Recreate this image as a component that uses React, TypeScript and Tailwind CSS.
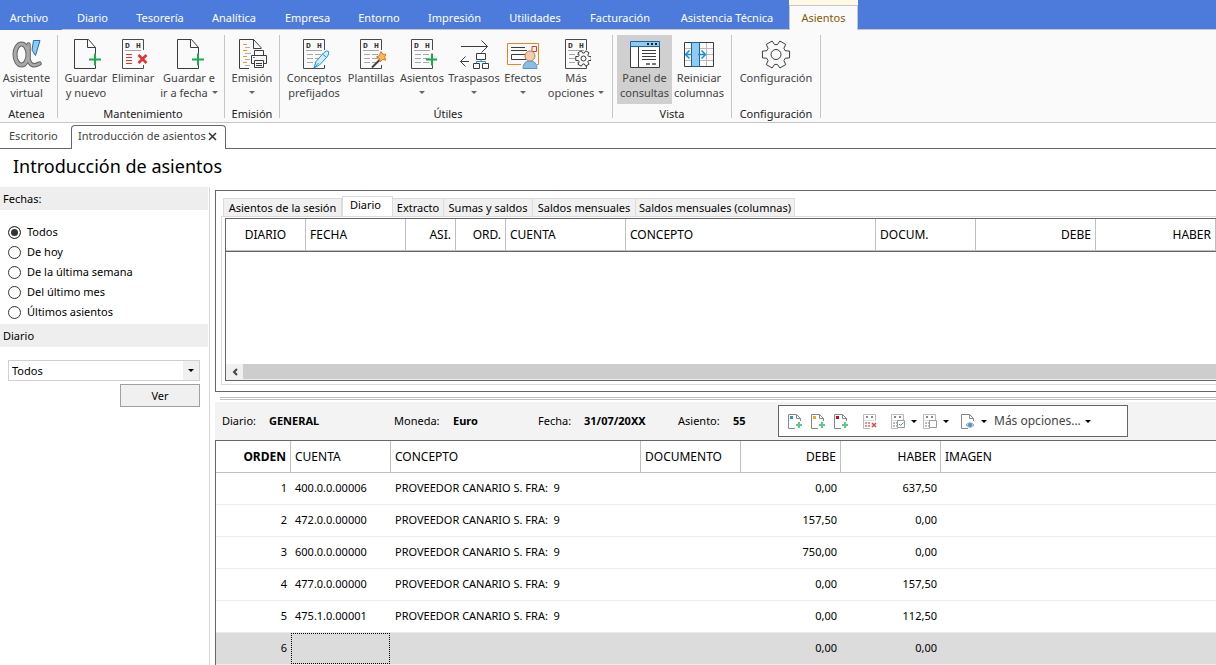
import React from 'react';
import clsx from 'clsx';

interface IconProps {
  children?: React.ReactNode;
  size?: string;
}

const Icon: React.FC<IconProps> = ({ children, size = '0 0 30 30' }) => {
  const [, , w, h] = size.split(' ');
  return (
    <svg
      viewBox={size}
      width={w}
      height={h}
      fill="none"
      stroke="#3c3c3c"
      className="shrink-0"
      aria-hidden="true"
    >
      {children}
    </svg>
  );
};

const gearPath = (cx: number, cy: number, outer: number, inner: number) => {
  const points: string[] = [];
  for (let i = 0; i < 6; i++) {
    const steps: [number, number][] = [
      [-22, inner],
      [-14, outer],
      [14, outer],
      [22, inner],
    ];
    steps.forEach(([offset, r]) => {
      const a = ((i * 60 + offset) * Math.PI) / 180;
      points.push(
        `${(cx + r * Math.cos(a)).toFixed(2)} ${(cy + r * Math.sin(a)).toFixed(2)}`
      );
    });
  }
  return `M${points.join('L')}Z`;
};

const AlphaIcon = () => (
  <Icon size="0 0 30 30">
    <ellipse cx="9.5" cy="15.5" rx="6.5" ry="10.5" stroke="#666" strokeWidth="5" />
    <path
      d="M16.500 5.500V20Q18.500 29.500 27.500 24.500"
      stroke="#666"
      strokeWidth="4.5"
      strokeLinecap="round"
    />
    <ellipse cx="9.5" cy="15.5" rx="6.5" ry="10.5" stroke="#a9a9a9" strokeWidth="3" />
    <path
      d="M16.500 5.500V20Q18.500 29.500 27.500 24.500"
      stroke="#a9a9a9"
      strokeWidth="2.5"
      strokeLinecap="round"
    />
    <path d="M21.500 1.500H28L23.500 16.500L20 11Z" fill="#8ec9f2" stroke="#1a6fb5" />
  </Icon>
);

const SaveIcon = () => (
  <Icon>
    <path d="M24.500 24.500V29.500H3.500V.5H17.500L24.500 8.500V15M16.500 .5V8.500H24.500" />
    <path d="M24 14.500V26.500M18 20.500H30" stroke="#19a94f" strokeWidth="2" />
  </Icon>
);

interface LedgerProps {
  children?: React.ReactNode;
  accent?: string;
}

const LedgerIcon: React.FC<LedgerProps> = ({ children, accent }) => (
  <Icon>
    <path d="M25.500 11V.5H4.500V29.500H25.500V26" stroke="#4a4a4a" />
    <text x="7" y="9" fontSize="8" fill="#333" stroke="none" className='font-["Liberation_Mono"] font-bold'>
      D
    </text>
    <text x="18" y="9" fontSize="8" fill="#333" stroke="none" className='font-["Liberation_Mono"] font-bold'>
      H
    </text>
    <path d="M7 11.500H23" stroke="#a8a8a8" />
    {accent ? (
      <path d="M8 15.500H14M8 18.500H14M8 21.500H14M8 24.500H14" stroke={accent} />
    ) : (
      <path
        d="M8 15.500H14M16 15.500H22M8 19.500H14M16 19.500H22M8 23.500H14M16 23.500H22"
        stroke="#a8a8a8"
      />
    )}
    {children}
  </Icon>
);

const DeleteIcon = () => (
  <LedgerIcon accent="#e5342f">
    <path d="M20.500 16L28.500 24M28.500 16L20.500 24" stroke="#e5342f" strokeWidth="2.5" />
  </LedgerIcon>
);

const PrintIcon = () => (
  <Icon size="0 0 30 30">
    <path d="M12 29.500H2.500V.5H16.500L24 8.500V10M16.500 .5V9.500H24" />
    <path d="M6 5.500H10M6 11.500H10M6 17.500H10M6 23.500H10" stroke="#ea9a1c" />
    <path d="M8 8.500H13M8 14.500H14M8 20.500H13M8 26.500H13" stroke="#b0b0b0" />
    <path
      d="M17.500 16.500V11.500H26.500V16.500M17.500 24.500H14.500V16.500H29.500V24.500H26.500M17.500 21.500H26.500V28.500H17.500ZM19 24.500H25M19 26.500H25"
      fill="#fafafa"
    />
    <path d="M16 18.500H18" stroke="#2a8fd8" />
  </Icon>
);

const PenIcon = () => (
  <LedgerIcon>
    <path
      d="M15 29L17 22.500L24.500 14Q28 10.500 29.500 12.500Q30.500 15 28 18L20.500 26Z"
      fill="#d3edfb"
      stroke="#1996d8"
    />
    <path d="M15 29L19.500 24M23.500 15L27.500 18.500" stroke="#1996d8" />
  </LedgerIcon>
);

const WandIcon = () => (
  <LedgerIcon>
    <path d="M16 28.500L25 19.500" stroke="#444" strokeWidth="2" />
    <path
      d="M25 12.500L27 15.500L30.500 15L28.500 18L30 21L26.500 20.500L24 23L23.500 19.500L20.500 18L23.500 16.500Z"
      fill="#f6bb57"
      stroke="#e2711d"
    />
  </LedgerIcon>
);

const EntryIcon = () => (
  <LedgerIcon>
    <path d="M25 14.500V26.500M19 20.500H31" stroke="#19a94f" strokeWidth="2" />
  </LedgerIcon>
);

const TransferIcon = () => (
  <Icon>
    <path d="M2 7.500H28.500M22.500 1.500L28.500 7.500L22.500 13.500M1.500 22.500H10M6.500 17.500L1.500 22.500L6.500 27.500" />
    <path d="M17.500 14.500H26.500V20.500H17.500ZM14.500 24.500H20.500V29.500H14.500ZM23.500 24.500H29.500V29.500H23.500Z" />
    <path d="M22 20.500V22.500M17.500 24V22.500H26.500V24" stroke="#2a8fd8" />
  </Icon>
);

const BillIcon = () => (
  <Icon size="0 0 32 30">
    <path d="M14 25.500H.5V4.500H31.500V25.500H30" stroke="#ee8420" />
    <path d="M4 8.500H18M4 11.500H20M4.500 15.500H19V20.500H4.500Z" />
    <path d="M25 7.500H29.500V12.500H25Z" stroke="#e5342f" />
    <path d="M16 29.500Q16 22 23 22Q30 22 30 29.500Z" fill="#8cbbe6" stroke="#5797cf" />
    <circle cx="23" cy="17" r="5" fill="#f4cda8" stroke="#b98453" />
  </Icon>
);

const LedgerGearIcon = () => (
  <LedgerIcon>
    <path d={gearPath(22.5, 19.5, 8, 5.5)} fill="#fafafa" strokeLinejoin="round" />
    <circle cx="22.5" cy="19.5" r="2.5" />
  </LedgerIcon>
);

const PanelIcon = () => (
  <Icon>
    <path d="M.5 5.500H29.500V28.500H.5Z" fill="#fff" />
    <path d="M.5 2.500H29.500V7.500H.5Z" fill="#92c9f0" stroke="#1567ad" />
    <path d="M17 5H19M21 5H23M25 5H27" strokeWidth="2" stroke="#222" />
    <path d="M8.500 8V28M12 11.500H26M12 14.500H26M12 17.500H26M12 20.500H26" />
    <path d="M16 25H20M22 25H26" stroke="#777" strokeWidth="2" />
  </Icon>
);

const ColumnsIcon = () => (
  <Icon>
    <path d="M1 9.500H29M1 15.500H29M1 21.500H29M22.500 4V27" stroke="#bbb" />
    <path d="M.5 3.500H29.500V27.500H.5Z" />
    <path d="M7.500 3.500H15.500V27.500H7.500Z" fill="#92c9f0" stroke="#1567ad" />
    <path
      d="M8 15.500H2M5.500 11.500L1.500 15.500L5.500 19.500M14 15.500H21M17.500 11.500L21.500 15.500L17.500 19.500"
      stroke="#1a8cd8"
      strokeWidth="1.5"
    />
  </Icon>
);

const GearIcon = () => (
  <Icon>
    <path d={gearPath(15, 15.5, 14, 10)} strokeLinejoin="round" />
    <circle cx="15" cy="15.5" r="5" />
  </Icon>
);

const Caret = ({ className = 'text-[#666]' }: { className?: string }) => (
  <svg width="6" height="3" viewBox="0 0 6 3" fill="currentColor" className={clsx('inline-block shrink-0', className)} aria-hidden="true">
    <path d="M0 0H6L3 3Z" />
  </svg>
);

interface RibbonButtonProps {
  icon: React.ReactNode;
  lines: [string, string?];
  width: string;
  caret?: boolean;
  active?: boolean;
}

const RibbonButton: React.FC<RibbonButtonProps> = ({ icon, lines, width, caret, active }) => (
  <button
    type="button"
    className={clsx(
      'flex h-[69px] flex-col items-center pt-1 leading-[15px] whitespace-nowrap text-[#444]',
      width,
      active && 'bg-[#d0d0d0]'
    )}
  >
    {icon}
    <span className="mt-px">{lines[0]}</span>
    <span className="flex h-[15px] items-center gap-1">
      {lines[1]}
      {caret && <Caret />}
    </span>
  </button>
);

interface RibbonGroupProps {
  title: string;
  width: string;
  children: React.ReactNode;
}

const RibbonGroup: React.FC<RibbonGroupProps> = ({ title, width, children }) => (
  <section className={clsx('flex shrink-0 flex-col border-r border-[#c6c6c6]', width)}>
    <div className="flex">{children}</div>
    <h2 className="mt-0.5 text-center leading-4 text-[#222]">{title}</h2>
  </section>
);

const menuItems = [
  { label: 'Archivo', width: 'w-[58px] mr-1' },
  { label: 'Diario', width: 'w-[61px]' },
  { label: 'Tesorería', width: 'w-[74px]' },
  { label: 'Analítica', width: 'w-[74px]' },
  { label: 'Empresa', width: 'w-[73px]' },
  { label: 'Entorno', width: 'w-[70px]' },
  { label: 'Impresión', width: 'w-[81px]' },
  { label: 'Utilidades', width: 'w-[80px]' },
  { label: 'Facturación', width: 'w-[90px]' },
  { label: 'Asistencia Técnica', width: 'w-[124px]' },
];

const Menu = () => (
  <nav className="flex h-[30px] bg-[#4c7bdb] text-white">
    {menuItems.map(({ label, width }, i) => (
      <a
        key={label}
        href="#"
        className={clsx(
          'flex shrink-0 items-center justify-center border-b pt-2',
          i === 0 ? 'border-transparent' : 'border-[#c6c6c6]',
          width
        )}
      >
        {label}
      </a>
    ))}
    <div className="flex w-[69px] shrink-0 flex-col bg-[#fef8e6] pt-[5px]">
      <a
        href="#"
        className="flex flex-1 items-center justify-center border-x border-t border-[#c6c6c6] bg-[#fafafa] text-[#7f6000]"
      >
        Asientos
      </a>
    </div>
    <div className="flex-1 border-b border-[#c6c6c6]" />
  </nav>
);

const Ribbon = () => (
  <div className="flex h-[93px] border-b border-[#c6c6c6] bg-[#fafafa] pt-[5px] pb-1">
    <RibbonGroup title="Atenea" width="w-[58px] pr-1">
      <RibbonButton icon={<AlphaIcon />} lines={['Asistente', 'virtual']} width="w-[53px]" />
    </RibbonGroup>
    <RibbonGroup title="Mantenimiento" width="w-[167px] pl-1">
      <RibbonButton icon={<SaveIcon />} lines={['Guardar', 'y nuevo']} width="w-[48px]" />
      <RibbonButton icon={<DeleteIcon />} lines={['Eliminar']} width="w-[46px]" />
      <RibbonButton icon={<SaveIcon />} lines={['Guardar e', 'ir a fecha']} width="w-[66px]" caret />
    </RibbonGroup>
    <RibbonGroup title="Emisión" width="w-[55px]">
      <RibbonButton icon={<PrintIcon />} lines={['Emisión']} width="w-[54px]" caret />
    </RibbonGroup>
    <RibbonGroup title="Útiles" width="w-[333px] pl-1">
      <RibbonButton icon={<PenIcon />} lines={['Conceptos', 'prefijados']} width="w-[60px]" />
      <RibbonButton icon={<WandIcon />} lines={['Plantillas']} width="w-[54px]" />
      <RibbonButton icon={<EntryIcon />} lines={['Asientos']} width="w-[48px]" caret />
      <RibbonButton icon={<TransferIcon />} lines={['Traspasos']} width="w-[56px]" caret />
      <RibbonButton icon={<BillIcon />} lines={['Efectos']} width="w-[42px]" caret />
      <RibbonButton icon={<LedgerGearIcon />} lines={['Más', 'opciones']} width="w-[64px]" caret />
    </RibbonGroup>
    <RibbonGroup title="Vista" width="w-[119px] px-1">
      <RibbonButton icon={<PanelIcon />} lines={['Panel de', 'consultas']} width="w-[55px]" active />
      <RibbonButton icon={<ColumnsIcon />} lines={['Reiniciar', 'columnas']} width="w-[54px]" />
    </RibbonGroup>
    <RibbonGroup title="Configuración" width="w-[89px]">
      <RibbonButton icon={<GearIcon />} lines={['Configuración']} width="w-[88px]" />
    </RibbonGroup>
  </div>
);

const DocumentTabs = () => (
  <div className="flex h-[26px] items-end text-[#444]">
    <a href="#" className="flex h-full w-[71px] items-center border-b border-[#666] pt-px pl-[9px]">
      Escritorio
    </a>
    <div className="flex h-6 w-[155px] items-center justify-between rounded-t border-x border-t border-[#666] pr-2 pb-0.5 pl-1.5 whitespace-nowrap">
      <a href="#">Introducción de asientos</a>
      <button type="button" aria-label="Cerrar">
        <Icon size="0 0 9 9">
          <path d="M1 1L8 8M8 1L1 8" strokeWidth="1.5" stroke="#333" />
        </Icon>
      </button>
    </div>
    <div className="h-full flex-1 border-b border-[#666]" />
  </div>
);

const dateFilters = [
  'Todos',
  'De hoy',
  'De la última semana',
  'Del último mes',
  'Últimos asientos',
];

const Sidebar = () => (
  <aside className="w-[210px] shrink-0 border-r border-[#d6d6d6]">
    <fieldset className="mr-px">
      <legend className="h-[23px] w-full bg-[#eee] pl-[3px] leading-[23px]">Fechas:</legend>
      <div className="pt-3 pb-0.5">
        {dateFilters.map((label) => (
          <label key={label} className="flex h-5 items-center gap-1.5 pl-2">
            <input
              type="radio"
              name="fechas"
              defaultChecked={label === 'Todos'}
              className="size-[13px] appearance-none rounded-full border border-[#333] bg-white checked:bg-[#333] checked:shadow-[inset_0_0_0_2px_white]"
            />
            {label}
          </label>
        ))}
      </div>
    </fieldset>
    <label htmlFor="diario" className="mr-px block h-[23px] bg-[#eee] pl-[3px] leading-[23px]">
      Diario
    </label>
    <div className="mt-[13px] ml-2 flex w-48 flex-col items-end gap-[3px]">
      <div className="relative w-full">
        <select
          id="diario"
          className="block h-[21px] w-full appearance-none border border-[#d0d0d0] bg-white pt-px pl-[3px]"
        >
          <option>Todos</option>
        </select>
        <span className="pointer-events-none absolute inset-y-px right-px flex w-4 items-center justify-center bg-[#f0f0f0]">
          <Caret className="text-black" />
        </span>
      </div>
      <button type="button" className="h-[23px] w-20 border border-[#a0a0a0] bg-[#f0f0f0] pt-px">
        Ver
      </button>
    </div>
  </aside>
);

const queryTabs = [
  { label: 'Asientos de la sesión', width: 'w-[119px]' },
  { label: 'Diario', width: 'w-[51px]' },
  { label: 'Extracto', width: 'w-[51px]' },
  { label: 'Sumas y saldos', width: 'w-[89px]' },
  { label: 'Saldos mensuales', width: 'w-[103px]' },
  { label: 'Saldos mensuales (columnas)', width: 'w-[159px]' },
];

const queryColumns = [
  { label: 'DIARIO', cell: 'w-[80px] text-center' },
  { label: 'FECHA', cell: 'w-[100px] text-left' },
  { label: 'ASI.', cell: 'w-[50px] text-right' },
  { label: 'ORD.', cell: 'w-[50px] text-right' },
  { label: 'CUENTA', cell: 'w-[120px] text-left' },
  { label: 'CONCEPTO', cell: 'text-left' },
  { label: 'DOCUM.', cell: 'w-[100px] text-left' },
  { label: 'DEBE', cell: 'w-[120px] text-right' },
  { label: 'HABER', cell: 'w-[120px] text-right' },
];

const QueryPanel = () => (
  <section className="mt-[3px] border-y border-l border-[#666] pt-[5px] pb-1.5 pl-[5px]">
    <div role="tablist" className="flex items-end pl-0.5 leading-4 whitespace-nowrap">
      {queryTabs.map(({ label, width }) => (
        <button
          key={label}
          type="button"
          role="tab"
          aria-selected={label === 'Diario'}
          className={clsx(
            'shrink-0 border-t border-[#dcdcdc]',
            width,
            label === 'Diario' ? 'h-5 border-x bg-white pr-1 pb-1' : 'h-[18px] border-r bg-[#f0f0f0] first:border-l'
          )}
        >
          {label}
        </button>
      ))}
    </div>
    <div className="border-y border-l border-[#dcdcdc] pt-px pb-[3px] pl-[3px]">
      <div className="border-y border-l border-[#666]">
        <table className="w-full table-fixed border-separate border-spacing-0 text-[12px]">
          <thead>
            <tr>
              {queryColumns.map(({ label, cell }) => (
                <th
                  key={label}
                  className={clsx('h-8 border-r border-b border-[#c0c0c0] px-1 font-normal', cell)}
                >
                  {label}
                </th>
              ))}
            </tr>
          </thead>
        </table>
        <div className="h-[113px] border-t border-[#666]" />
        <div className="flex h-4 border-b border-[#eee]">
          <button
            type="button"
            aria-label="Desplazar a la izquierda"
            className="flex w-[17px] items-center justify-center bg-[#f0f0f0]"
          >
            <Icon size="0 0 6 8">
              <path d="M5 1L2 4L5 7" stroke="#444" strokeWidth="2" />
            </Icon>
          </button>
          <div className="flex-1 bg-[#cdcdcd]" />
        </div>
      </div>
    </div>
  </section>
);

const SmallDoc = ({ color, children }: { color?: string; children?: React.ReactNode }) => (
  <Icon size="0 0 15 17">
    <path d="M12.500 8V5.500L8.500 1.500H.5V15.500H7M8.500 1.500V5.500H12.500" stroke="#888" />
    {color && <path d="M2 3H5V6H2Z" fill={color} stroke="none" />}
    {children}
  </Icon>
);

const SmallPlus = () => <path d="M11 9V15M8 12H14" stroke="#5cc98a" strokeWidth="2" />;

const SmallLedger = ({ accent = '#bbb', children }: { accent?: string; children?: React.ReactNode }) => (
  <Icon size="0 0 15 17">
    <path d="M12.500 8V1.500H.5V15.500H7" stroke="#bbb" />
    <path d="M3 4H5M8 4H10" stroke="#888" strokeWidth="2" />
    <path d="M1 7.500H11" stroke="#ddd" />
    <path d="M2 10H4M5 10H7M2 13H4M5 13H7" stroke={accent} strokeWidth="2" />
    {children}
  </Icon>
);

const ToolbarButton = ({ label, caret, width, children }: { label: string; caret?: boolean; width: string; children: React.ReactNode }) => (
  <button type="button" aria-label={label} className={clsx('flex shrink-0 items-center gap-[5px]', width)}>
    {children}
    {caret && <Caret className="text-black" />}
  </button>
);

const EntryToolbar = () => (
  <div className="flex h-8 w-[350px] shrink-0 items-center border border-[#666] bg-white pl-[9px]">
    <ToolbarButton label="Insertar antes" width="w-[23px]">
      <SmallDoc color="#1a9ae0">
        <SmallPlus />
      </SmallDoc>
    </ToolbarButton>
    <ToolbarButton label="Insertar" width="w-[23px]">
      <SmallDoc color="#f2a922">
        <SmallPlus />
      </SmallDoc>
    </ToolbarButton>
    <ToolbarButton label="Insertar al final" width="w-[29px]">
      <SmallDoc color="#d8001c">
        <SmallPlus />
      </SmallDoc>
    </ToolbarButton>
    <ToolbarButton label="Eliminar línea" width="w-7">
      <SmallLedger accent="#f08c88">
        <path d="M9 10L13 14M13 10L9 14" stroke="#e5443f" strokeWidth="1.5" />
      </SmallLedger>
    </ToolbarButton>
    <ToolbarButton label="Marcar" width="w-8" caret>
      <SmallLedger>
        <path d="M6.500 7.500H13.500V14.500H6.500Z" fill="#fff" stroke="#999" />
        <path d="M8 11L9.500 12.500L12.500 9.500" stroke="#2faa60" />
      </SmallLedger>
    </ToolbarButton>
    <ToolbarButton label="Desmarcar" width="w-[38px]" caret>
      <SmallLedger>
        <path d="M6.500 7.500H13.500V14.500H6.500Z" fill="#fff" stroke="#999" />
      </SmallLedger>
    </ToolbarButton>
    <ToolbarButton label="Ver documento" width="w-[33px]" caret>
      <SmallDoc>
        <path d="M5 12Q9 7.500 13 12Q9 16.500 5 12Z" fill="#c9d8e4" stroke="#94a7b5" />
        <circle cx="9" cy="12" r="2" fill="#4b93cf" stroke="none" />
      </SmallDoc>
    </ToolbarButton>
    <button type="button" className="flex items-center gap-1 text-[12px] text-[#444]">
      Más opciones...
      <Caret className="text-black" />
    </button>
  </div>
);

const entryFields = [
  { label: 'Diario:', value: 'GENERAL', labelWidth: 'w-[47px]', valueWidth: 'w-[125px]' },
  { label: 'Moneda:', value: 'Euro', labelWidth: 'w-[59px]', valueWidth: 'w-[85px]' },
  { label: 'Fecha:', value: '31/07/20XX', labelWidth: 'w-[46px]', valueWidth: 'w-[94px]' },
  { label: 'Asiento:', value: '55', labelWidth: 'w-[55px]', valueWidth: 'w-[45px]' },
];

const entryColumns = [
  { label: 'ORDEN', cell: 'w-[75px] text-right font-bold' },
  { label: 'CUENTA', cell: 'w-[100px] text-left font-normal' },
  { label: 'CONCEPTO', cell: 'w-[250px] text-left font-normal' },
  { label: 'DOCUMENTO', cell: 'w-[100px] text-left font-normal' },
  { label: 'DEBE', cell: 'w-[100px] text-right font-normal' },
  { label: 'HABER', cell: 'w-[100px] text-right font-normal' },
  { label: 'IMAGEN', cell: 'text-left font-normal' },
];

const entries = [
  { cuenta: '400.0.0.00006', concepto: 'PROVEEDOR CANARIO S. FRA:  9', debe: '0,00', haber: '637,50' },
  { cuenta: '472.0.0.00000', concepto: 'PROVEEDOR CANARIO S. FRA:  9', debe: '157,50', haber: '0,00' },
  { cuenta: '600.0.0.00000', concepto: 'PROVEEDOR CANARIO S. FRA:  9', debe: '750,00', haber: '0,00' },
  { cuenta: '477.0.0.00000', concepto: 'PROVEEDOR CANARIO S. FRA:  9', debe: '0,00', haber: '157,50' },
  { cuenta: '475.1.0.00001', concepto: 'PROVEEDOR CANARIO S. FRA:  9', debe: '0,00', haber: '112,50' },
  { cuenta: '', concepto: '', debe: '0,00', haber: '0,00' },
];

const EntryTable = () => (
  <table className="w-full table-fixed border-separate border-spacing-0 border-t border-l border-[#666]">
    <thead className="text-[12px]">
      <tr>
        {entryColumns.map(({ label, cell }) => (
          <th
            key={label}
            className={clsx('h-8 border-r border-b border-[#c0c0c0] px-1 last:border-r-0', cell)}
          >
            {label}
          </th>
        ))}
      </tr>
    </thead>
    <tbody>
      {entries.map((row, i) => (
        <tr
          key={i}
          className={clsx(
            '*:h-8 *:border-b *:border-[#ececec] *:p-0 *:px-1 *:whitespace-pre',
            !row.cuenta && 'bg-[#dcdcdc]'
          )}
        >
          <td className="text-right">{i + 1}</td>
          <td>
            {row.cuenta || (
              <input
                aria-label="Cuenta"
                className="-mx-1 block h-[31px] w-[99px] border border-dotted border-black bg-transparent px-1 outline-none"
              />
            )}
          </td>
          <td>{row.concepto}</td>
          <td />
          <td className="text-right">{row.debe}</td>
          <td className="text-right">{row.haber}</td>
          <td />
        </tr>
      ))}
    </tbody>
  </table>
);

const App = () => {
  return (
    <div className='flex min-h-screen flex-col overflow-x-hidden bg-white font-["Noto_Sans",sans-serif] text-[11px] text-black'>
      <Menu />
      <Ribbon />
      <DocumentTabs />
      <h1 className="h-[38px] pl-[13px] text-[18px] leading-[34px]">Introducción de asientos</h1>
      <div className="flex flex-1">
        <Sidebar />
        <main className="min-w-0 flex-1 pl-[5px]">
          <QueryPanel />
          <div className="mt-[5px] ml-[5px] h-[3px] border-y border-[#c0c0c0]" />
          <div className="mt-0.5 flex h-[38px] items-center bg-[#f3f3f3] pl-[7px]">
            {entryFields.map(({ label, value, labelWidth, valueWidth }) => (
              <React.Fragment key={label}>
                <span className={clsx('shrink-0', labelWidth)}>{label}</span>
                <strong className={clsx('shrink-0', valueWidth)}>{value}</strong>
              </React.Fragment>
            ))}
            <EntryToolbar />
          </div>
          <EntryTable />
        </main>
      </div>
    </div>
  );
};

export default App;
